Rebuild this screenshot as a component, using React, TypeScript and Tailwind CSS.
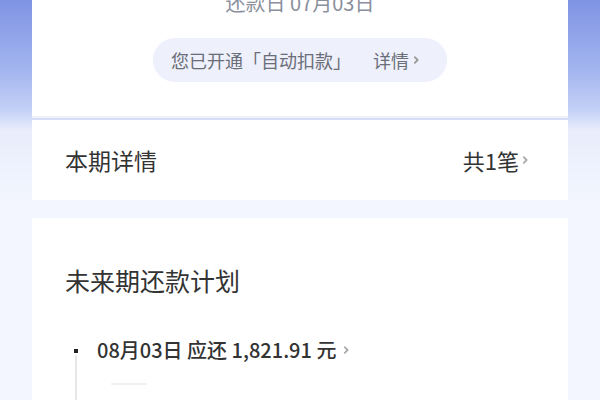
import React from 'react';

function Chevron({ className = '' }: { className?: string }) {
  return (
    <svg viewBox="0 0 8 12" className={className} fill="none" stroke="currentColor" strokeWidth="1.6" strokeLinecap="round" strokeLinejoin="round">
      <path d="M2.5 3.5 5 6 2.5 8.5" />
    </svg>
  );
}

export default function App() {
  return (
    <div
      className="h-[400px] w-[600px] overflow-hidden bg-[linear-gradient(180deg,#7f93e4_0px,#a3b5ef_70px,#c4d0f6_110px,#e8edfc_130px,#f3f6fe_200px,#f3f6fe_400px)] px-[32px]"
      style={{ fontFamily: '"Noto Sans CJK SC", "Noto Sans", sans-serif' }}
    >
      {/* top summary card */}
      <div className="flex h-[118px] flex-col items-center border-b-[2px] border-[#f1f2f6] bg-white">
        <div className="-mt-[12px] text-[20px] leading-[30px] text-[#8a8f9c]">还款日 07月03日</div>
        <div className="mt-[20px] flex h-[44px] items-center rounded-full bg-[#eef0fb] pl-[18px] pr-[26px] text-[18px] text-[#6a6e78]">
          <span>您已开通「自动扣款」</span>
          <span className="ml-[22px]">详情</span>
          <Chevron className="ml-[3px] h-[14px] w-[9px] text-[#999]" />
        </div>
      </div>

      {/* current period row */}
      <div className="mt-[2px] flex h-[80px] items-center justify-between bg-white pl-[33px] pr-[38px]">
        <span className="text-[23px] text-[#333]">本期详情</span>
        <span className="flex items-center text-[22px] text-[#333]">
          共1笔
          <Chevron className="ml-[2px] h-[14px] w-[9px] text-[#aaa]" />
        </span>
      </div>

      {/* future plan */}
      <div className="mt-[18px] h-[300px] bg-white pl-[33px] pt-[45px]">
        <div className="text-[25px] leading-[34px] text-[#333]">未来期还款计划</div>
        <div className="relative mt-[38px] pl-[32px]">
          <div className="absolute left-[9px] top-[14px] h-[4px] w-[4px] bg-[#222]" />
          <div className="absolute left-[10px] top-[20px] h-[80px] w-[2px] bg-[#e6e6e6]" />
          <div className="flex items-center text-[20px] font-medium leading-[30px] text-[#333]">
            08月03日 应还 1,821.91 元
            <Chevron className="ml-[6px] h-[14px] w-[9px] text-[#aaa]" />
          </div>
          <div className="ml-[14px] mt-[18px] h-[2px] w-[36px] bg-[#f2f2f2]" />
        </div>
      </div>
    </div>
  );
}
